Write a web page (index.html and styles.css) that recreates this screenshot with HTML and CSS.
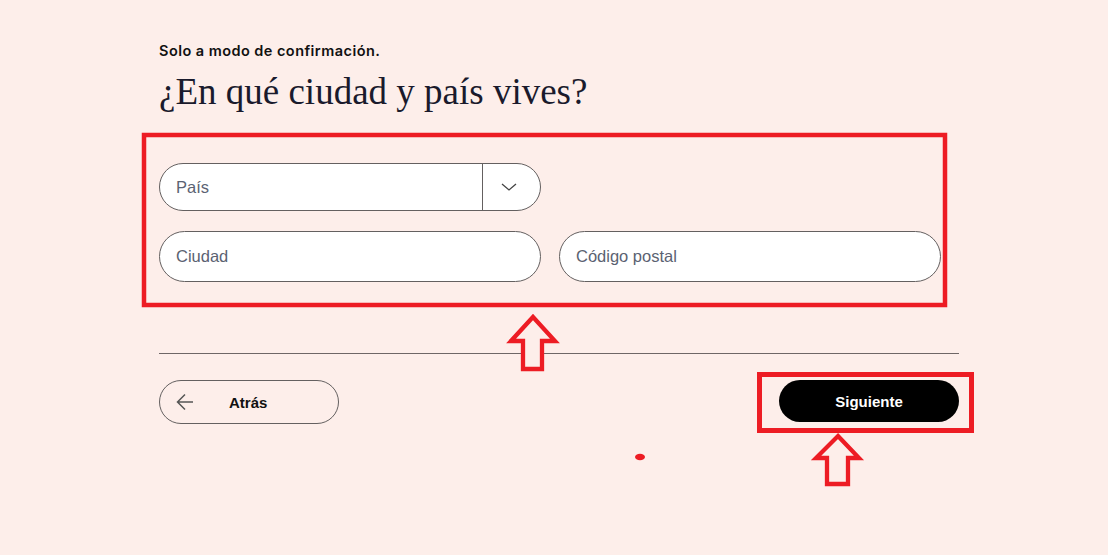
FILE: index.html
```html
<!DOCTYPE html>
<html lang="es">
<head>
<meta charset="utf-8">
<title>¿En qué ciudad y país vives?</title>
<link rel="stylesheet" href="styles.css">
</head>
<body>
<main class="page">
  <p class="subtitle">Solo a modo de confirmación.</p>
  <h1 class="title">¿En qué ciudad y país vives?</h1>

  <section class="fields">
    <div class="row">
      <div class="select">
        <span class="placeholder">País</span>
        <span class="select-btn">
          <svg width="16" height="8" viewBox="0 0 16 8"><path d="M1 1 L8 7 L15 1" fill="none" stroke="#444" stroke-width="1.3"/></svg>
        </span>
      </div>
    </div>
    <div class="row">
      <div class="input"><span class="placeholder">Ciudad</span></div>
      <div class="input"><span class="placeholder">Código postal</span></div>
    </div>
  </section>

  <hr class="divider">

  <div class="actions">
    <button class="btn-back">
      <svg width="18" height="18" viewBox="0 0 18 18"><path d="M17 9 H1.5 M9 1.5 L1.5 9 L9 16.5" fill="none" stroke="#555" stroke-width="1.5"/></svg>
      <span>Atrás</span>
    </button>
    <button class="btn-next">Siguiente</button>
  </div>
</main>

<svg class="annotations" width="1108" height="555" viewBox="0 0 1108 555">
  <rect x="144" y="135" width="801" height="170" fill="none" stroke="#ed1c24" stroke-width="4.5"/>
  <rect x="759.5" y="374.5" width="212" height="56" fill="none" stroke="#ed1c24" stroke-width="5"/>
  <polygon points="533,317 555,341 542,341 542,369 523,369 523,341 511,341" fill="#fdeeea" stroke="#ed1c24" stroke-width="4.3" stroke-linejoin="miter"/>
  <polygon points="838,436 859,458 848,458 848,484 827,484 827,458 816,458" fill="#fdeeea" stroke="#ed1c24" stroke-width="4.3" stroke-linejoin="miter"/>
  <ellipse cx="640" cy="457" rx="5" ry="3.3" fill="#ed1c24"/>
</svg>
</body>
</html>
```

FILE: styles.css
```css
* { box-sizing: border-box; }

html, body {
  margin: 0;
  padding: 0;
  background: #fdeeea;
  height: 555px;
  overflow: hidden;
}

body {
  position: relative;
  font-family: "Liberation Sans", Arial, sans-serif;
  color: #111;
}

.page {
  width: 800px;
  margin-left: 159px;
  padding-top: 41px;
}

.subtitle {
  margin: 0;
  font-family: Inter, "Liberation Sans", Arial, sans-serif;
  font-size: 14.5px;
  line-height: 20px;
  font-weight: 600;
  letter-spacing: 0.45px;
  color: #111;
}

.title {
  margin: 9px 0 0;
  font-family: "Liberation Serif", "Times New Roman", serif;
  font-weight: 400;
  font-size: 37px;
  line-height: 44px;
  color: #1a1a2c;
}

.fields {
  margin-top: 49px;
  display: flex;
  flex-direction: column;
  gap: 20px;
}

.row {
  display: flex;
  gap: 18px;
}

.select {
  width: 382px;
  height: 48px;
  border: 1px solid #646060;
  border-radius: 24px;
  background: #fff;
  display: flex;
  align-items: center;
  overflow: hidden;
}

.select .placeholder {
  flex: 1;
  padding-left: 16px;
}

.select-btn {
  width: 58px;
  height: 100%;
  border-left: 1px solid #646060;
  display: flex;
  align-items: center;
  justify-content: center;
  padding-right: 6px;
}

.input {
  width: 382px;
  height: 51px;
  border: 1px solid #646060;
  border-radius: 26px;
  background: #fff;
  display: flex;
  align-items: center;
  padding-left: 16px;
}

.placeholder {
  font-size: 16.5px;
  color: #5b6272;
}

.divider {
  margin: 71px 0 0;
  border: 0;
  border-top: 1px solid #6e6666;
  height: 0;
}

.actions {
  margin-top: 26px;
  display: flex;
  justify-content: space-between;
  align-items: flex-start;
}

.btn-back {
  width: 180px;
  height: 44px;
  border: 1px solid #646060;
  border-radius: 22px;
  background: transparent;
  display: flex;
  align-items: center;
  padding: 0 0 0 16px;
  gap: 35px;
  font-family: "Liberation Sans", Arial, sans-serif;
  font-size: 15px;
  font-weight: 700;
  color: #111;
}

.btn-next {
  width: 180px;
  height: 42px;
  border: 0;
  border-radius: 21px;
  background: #000;
  color: #fff;
  font-family: "Liberation Sans", Arial, sans-serif;
  font-size: 15px;
  font-weight: 700;
}

.annotations {
  position: absolute;
  left: 0;
  top: 0;
  pointer-events: none;
}
```
